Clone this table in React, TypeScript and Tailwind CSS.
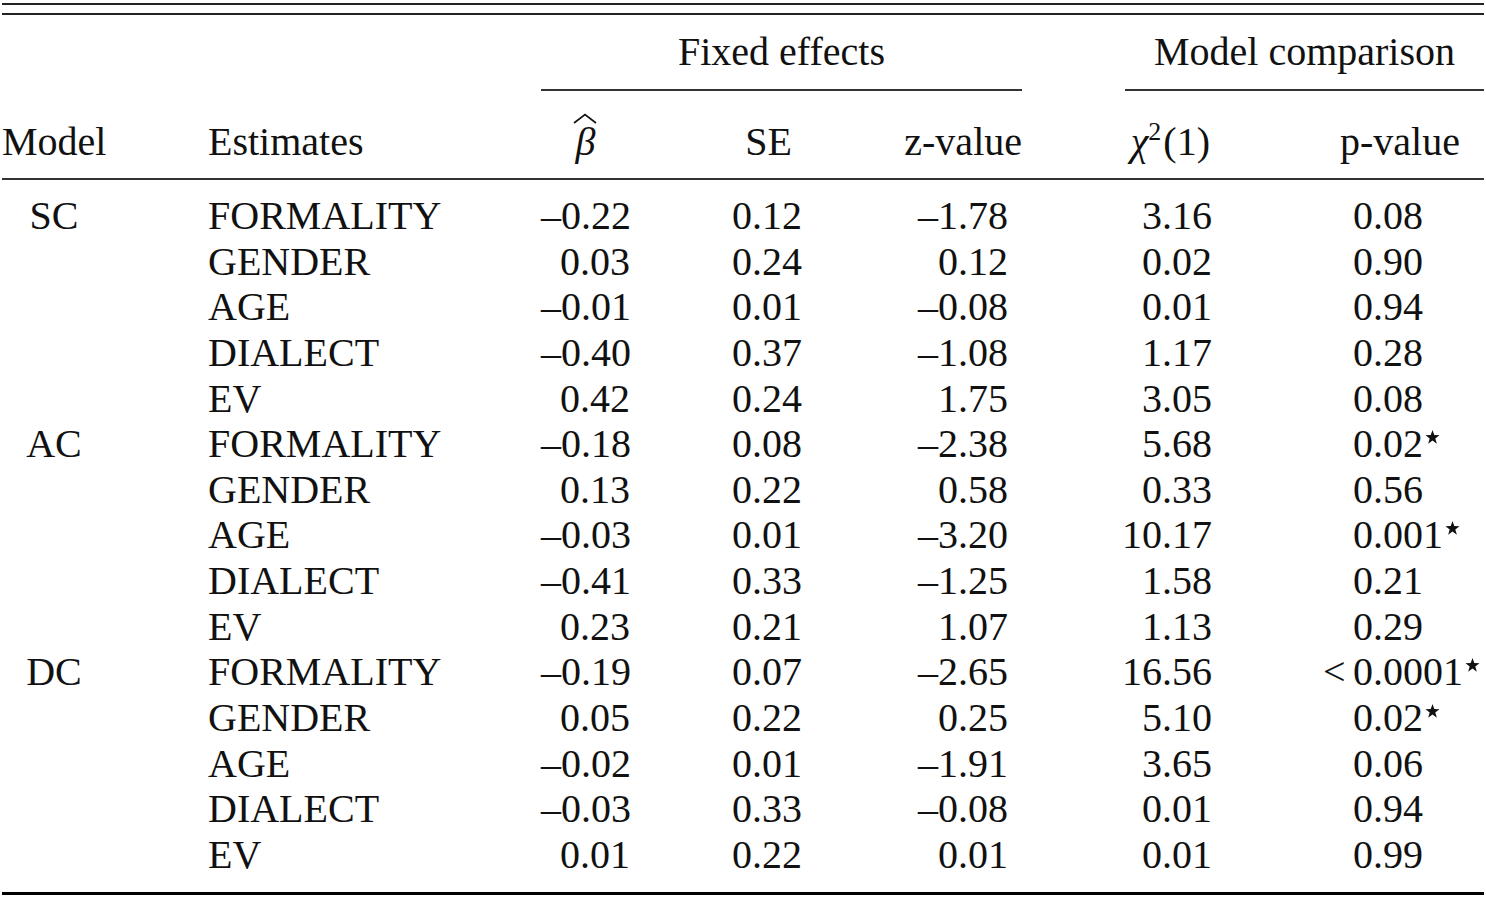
import type { ReactNode } from "react";

type Row = {
	model?: string;
	name: string;
	beta: string;
	se: string;
	z: string;
	chi: string;
	pre?: string;
	p: string;
	star?: boolean;
};

const ROWS: Row[] = [
	{ model: "SC", name: "FORMALITY", beta: "–0.22", se: "0.12", z: "–1.78", chi: "3.16", p: "0.08" },
	{ name: "GENDER", beta: "0.03", se: "0.24", z: "0.12", chi: "0.02", p: "0.90" },
	{ name: "AGE", beta: "–0.01", se: "0.01", z: "–0.08", chi: "0.01", p: "0.94" },
	{ name: "DIALECT", beta: "–0.40", se: "0.37", z: "–1.08", chi: "1.17", p: "0.28" },
	{ name: "EV", beta: "0.42", se: "0.24", z: "1.75", chi: "3.05", p: "0.08" },
	{ model: "AC", name: "FORMALITY", beta: "–0.18", se: "0.08", z: "–2.38", chi: "5.68", p: "0.02", star: true },
	{ name: "GENDER", beta: "0.13", se: "0.22", z: "0.58", chi: "0.33", p: "0.56" },
	{ name: "AGE", beta: "–0.03", se: "0.01", z: "–3.20", chi: "10.17", p: "0.001", star: true },
	{ name: "DIALECT", beta: "–0.41", se: "0.33", z: "–1.25", chi: "1.58", p: "0.21" },
	{ name: "EV", beta: "0.23", se: "0.21", z: "1.07", chi: "1.13", p: "0.29" },
	{ model: "DC", name: "FORMALITY", beta: "–0.19", se: "0.07", z: "–2.65", chi: "16.56", pre: "<", p: "0.0001", star: true },
	{ name: "GENDER", beta: "0.05", se: "0.22", z: "0.25", chi: "5.10", p: "0.02", star: true },
	{ name: "AGE", beta: "–0.02", se: "0.01", z: "–1.91", chi: "3.65", p: "0.06" },
	{ name: "DIALECT", beta: "–0.03", se: "0.33", z: "–0.08", chi: "0.01", p: "0.94" },
	{ name: "EV", beta: "0.01", se: "0.22", z: "0.01", chi: "0.01", p: "0.99" },
];

const GRID =
	"grid grid-cols-[206px_333px_89px_172px_220px_190px_272px] px-[2px] whitespace-nowrap";

function Star() {
	return (
		<svg
			viewBox="0 0 20 19"
			className="ml-[2px] mt-[9px] inline-block h-[14px] w-[15px] self-start"
			aria-hidden
		>
			<polygon
				points="10,0 12.4,6.9 19.5,7 13.8,11.4 15.9,18.5 10,14.3 4.1,18.5 6.2,11.4 0.5,7 7.6,6.9"
				fill="#111"
			/>
		</svg>
	);
}

function PValue({ pre, p, star }: { pre?: string; p: string; star?: boolean }) {
	return (
		<div className="flex pl-[111px]">
			<span className="w-[30px] pr-[8px] text-right">{pre}</span>
			<span>{p}</span>
			{star ? <Star /> : null}
		</div>
	);
}

function BetaHat() {
	return (
		<span className="relative inline-block italic">
			β
			<svg
				viewBox="0 0 24 11"
				className="absolute left-[-3px] top-[-6px] h-[11px] w-[24px]"
				aria-hidden
			>
				<polyline
					points="1,10 12,1.5 23,10"
					fill="none"
					stroke="#111"
					strokeWidth="1.6"
				/>
			</svg>
		</span>
	);
}

function Rule({ className }: { className: string }) {
	return <div className={className} />;
}

function Cell({ className, children }: { className?: string; children?: ReactNode }) {
	return <div className={className}>{children}</div>;
}

export default function App() {
	return (
		<div className="min-h-[898px] w-[1486px] bg-white font-['Liberation_Serif',serif] text-[40px] text-[#111]">
			<div className="mx-[2px] pt-[3px]">
				<Rule className="h-[1.5px] bg-[#222]" />
				<Rule className="mt-[8.5px] h-[2px] bg-[#222]" />
			</div>

			{/* spanner headings */}
			<div className={`${GRID} pt-[13.5px] leading-[46px]`}>
				<Cell className="col-span-2" />
				<Cell className="col-span-3 flex flex-col">
					<span className="pb-[14.5px] text-center">Fixed effects</span>
					<Rule className="h-[1.5px] bg-[#333]" />
				</Cell>
				<Cell className="col-span-2 flex flex-col pl-[103px]">
					<span className="pb-[14.5px] text-center">Model comparison</span>
					<Rule className="h-[1.5px] bg-[#333]" />
				</Cell>
			</div>

			{/* column headings */}
			<div className={`${GRID} pt-[28px] pb-[13.5px] leading-[46px]`}>
				<Cell className="w-[104px] text-center">Model</Cell>
				<Cell>Estimates</Cell>
				<Cell className="text-center">
					<BetaHat />
				</Cell>
				<Cell className="pr-[10px] text-right">SE</Cell>
				<Cell className="text-right">z-value</Cell>
				<Cell className="pr-[2px] text-right">
					<span className="italic">χ</span>
					<sup className="relative top-[-15px] text-[26px]">2</sup>
					<span className="pl-[2px]">(1)</span>
				</Cell>
				<Cell className="pl-[128px]">p-value</Cell>
			</div>

			<div className="mx-[2px]">
				<Rule className="h-[1.5px] bg-[#333]" />
			</div>

			<div className="pt-[13.5px] pb-[15px]">
				{ROWS.map((row, i) => (
					<div key={i} className={`${GRID} h-[45.64px] leading-[45.64px]`}>
						<Cell className="w-[104px] text-center">{row.model}</Cell>
						<Cell>{row.name}</Cell>
						<Cell className="text-right">{row.beta}</Cell>
						<Cell className="text-right">{row.se}</Cell>
						<Cell className="pr-[14px] text-right">{row.z}</Cell>
						<Cell className="text-right">{row.chi}</Cell>
						<PValue pre={row.pre} p={row.p} star={row.star} />
					</div>
				))}
			</div>

			<div className="mx-[2px]">
				<Rule className="h-[2.5px] bg-black" />
			</div>
		</div>
	);
}
